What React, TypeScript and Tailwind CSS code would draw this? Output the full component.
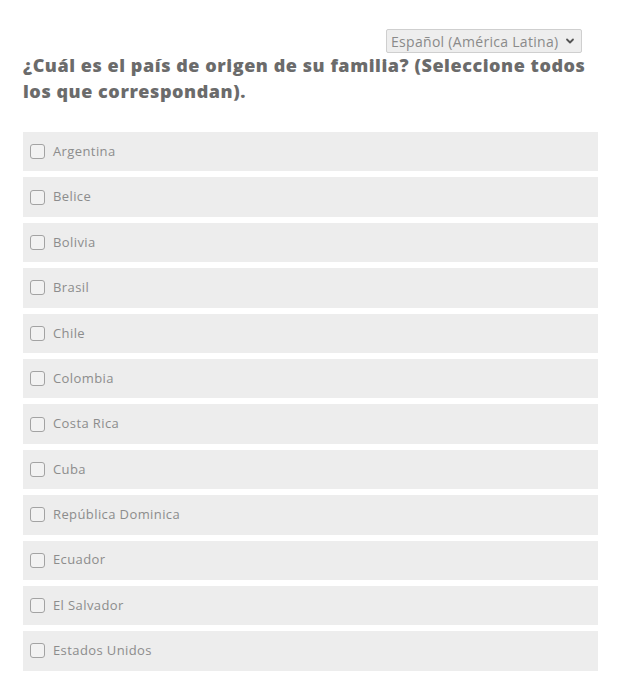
import React from "react";

const COUNTRIES = [
  "Argentina",
  "Belice",
  "Bolivia",
  "Brasil",
  "Chile",
  "Colombia",
  "Costa Rica",
  "Cuba",
  "República Dominica",
  "Ecuador",
  "El Salvador",
  "Estados Unidos",
];

const App: React.FC = () => {
  return (
    <div
      className="w-[618px] h-[675px] overflow-hidden bg-white"
      style={{ fontFamily: '"Open Sans", "Noto Sans", sans-serif' }}
    >
      {/* Language picker */}
      <div className="flex justify-end pt-[29px] pr-[36px]">
        <div className="flex items-center h-[24px] w-[196px] bg-[#eeeeee] border border-[#cfcfcf] rounded-[2px] pl-[4px] pr-[6px] text-[14px] tracking-[0.3px] text-[#8a8a8a]">
          <span className="flex-1 whitespace-nowrap">Español (América Latina)</span>
          <svg width="10" height="10" viewBox="0 0 10 10" className="text-[#555]">
            <path d="M2 3.5 L5 6.5 L8 3.5" fill="none" stroke="currentColor" strokeWidth="1.8" strokeLinecap="round" strokeLinejoin="round" />
          </svg>
        </div>
      </div>

      {/* Question */}
      <h1 className="ml-[23px] mr-[20px] -mt-[1px] text-[18px] leading-[26px] font-extrabold tracking-[0.55px] text-[#6b6b6b]">
        ¿Cuál es el país de origen de su familia? (Seleccione todos los que correspondan).
      </h1>

      {/* Options */}
      <div className="ml-[23px] w-[575px] mt-[28px] flex flex-col gap-[6px]">
        {COUNTRIES.map((c) => (
          <label
            key={c}
            className="flex items-center h-[39.4px] bg-[#ededed] pl-[7px] cursor-pointer"
          >
            <span className="w-[15px] h-[15px] border border-[#a3a3a3] rounded-[3px] bg-[#f2f2f2] shrink-0" />
            <span className="ml-[8px] text-[13px] tracking-[0.4px] text-[#8c8c8c]">{c}</span>
          </label>
        ))}
      </div>
    </div>
  );
};

export default App;
